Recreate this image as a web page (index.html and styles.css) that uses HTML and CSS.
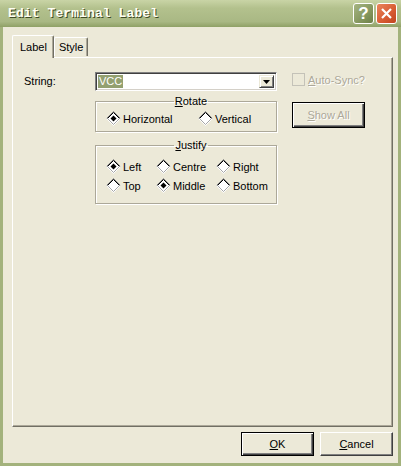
FILE: index.html
```html
<!DOCTYPE html>
<html lang="en">
<head>
    <meta charset="UTF-8">
    <title>Edit Terminal Label</title>
    <link rel="stylesheet" href="styles.css">
</head>
<body>
    <div class="window">
        <div class="titlebar">
            <span class="title">Edit Terminal Label</span>
            <div class="caption-btns">
                <span class="cap-btn help">?</span>
                <span class="cap-btn close">
                    <svg width="13" height="13" viewBox="0 0 13 13"><path d="M2 2 L11 11 M11 2 L2 11" stroke="#fff" stroke-width="2.2"/></svg>
                </span>
            </div>
        </div>

        <div class="client">
            <div class="tabs">
                <div class="tab active">Label</div>
                <div class="tab">Style</div>
            </div>

            <div class="panel">
                <div class="lbl">String:</div>

                <div class="col-mid">
                    <div class="combo">
                        <span class="combo-text"><span class="sel">VCC</span></span>
                        <span class="combo-btn">
                            <svg width="7" height="4" viewBox="0 0 7 4"><path d="M0 0 H7 L3.5 4 Z" fill="#000"/></svg>
                        </span>
                    </div>

                    <fieldset class="group rotate">
                        <legend><u>R</u>otate</legend>
                        <div class="radio-row cols-rotate">
                            <label class="radio"><svg class="dia" width="15" height="15" viewBox="0 0 15 15"><polygon points="7.5,1 14,7.5 7.5,14 1,7.5" fill="#fff"/><path d="M0.5 7.5 L7.5 0.5 L14.5 7.5" fill="none" stroke="#808080"/><path d="M1.5 7.5 L7.5 1.5 L13.5 7.5" fill="none" stroke="#000"/><path d="M0.5 7.5 L7.5 14.5 L14.5 7.5" fill="none" stroke="#fff"/><path d="M1.5 7.5 L7.5 13.5 L13.5 7.5" fill="none" stroke="#a6a6a6"/><polygon points="7.5,4.5 10.5,7.5 7.5,10.5 4.5,7.5" fill="#000"/></svg>Horizontal</label>
                            <label class="radio"><svg class="dia" width="15" height="15" viewBox="0 0 15 15"><polygon points="7.5,1 14,7.5 7.5,14 1,7.5" fill="#fff"/><path d="M0.5 7.5 L7.5 0.5 L14.5 7.5" fill="none" stroke="#808080"/><path d="M1.5 7.5 L7.5 1.5 L13.5 7.5" fill="none" stroke="#000"/><path d="M0.5 7.5 L7.5 14.5 L14.5 7.5" fill="none" stroke="#fff"/><path d="M1.5 7.5 L7.5 13.5 L13.5 7.5" fill="none" stroke="#a6a6a6"/></svg>Vertical</label>
                        </div>
                    </fieldset>

                    <fieldset class="group justify">
                        <legend><u>J</u>ustify</legend>
                        <div class="radio-row cols-justify">
                            <label class="radio"><svg class="dia" width="15" height="15" viewBox="0 0 15 15"><polygon points="7.5,1 14,7.5 7.5,14 1,7.5" fill="#fff"/><path d="M0.5 7.5 L7.5 0.5 L14.5 7.5" fill="none" stroke="#808080"/><path d="M1.5 7.5 L7.5 1.5 L13.5 7.5" fill="none" stroke="#000"/><path d="M0.5 7.5 L7.5 14.5 L14.5 7.5" fill="none" stroke="#fff"/><path d="M1.5 7.5 L7.5 13.5 L13.5 7.5" fill="none" stroke="#a6a6a6"/><polygon points="7.5,4.5 10.5,7.5 7.5,10.5 4.5,7.5" fill="#000"/></svg>Left</label>
                            <label class="radio"><svg class="dia" width="15" height="15" viewBox="0 0 15 15"><polygon points="7.5,1 14,7.5 7.5,14 1,7.5" fill="#fff"/><path d="M0.5 7.5 L7.5 0.5 L14.5 7.5" fill="none" stroke="#808080"/><path d="M1.5 7.5 L7.5 1.5 L13.5 7.5" fill="none" stroke="#000"/><path d="M0.5 7.5 L7.5 14.5 L14.5 7.5" fill="none" stroke="#fff"/><path d="M1.5 7.5 L7.5 13.5 L13.5 7.5" fill="none" stroke="#a6a6a6"/></svg>Centre</label>
                            <label class="radio"><svg class="dia" width="15" height="15" viewBox="0 0 15 15"><polygon points="7.5,1 14,7.5 7.5,14 1,7.5" fill="#fff"/><path d="M0.5 7.5 L7.5 0.5 L14.5 7.5" fill="none" stroke="#808080"/><path d="M1.5 7.5 L7.5 1.5 L13.5 7.5" fill="none" stroke="#000"/><path d="M0.5 7.5 L7.5 14.5 L14.5 7.5" fill="none" stroke="#fff"/><path d="M1.5 7.5 L7.5 13.5 L13.5 7.5" fill="none" stroke="#a6a6a6"/></svg>Right</label>
                            <label class="radio"><svg class="dia" width="15" height="15" viewBox="0 0 15 15"><polygon points="7.5,1 14,7.5 7.5,14 1,7.5" fill="#fff"/><path d="M0.5 7.5 L7.5 0.5 L14.5 7.5" fill="none" stroke="#808080"/><path d="M1.5 7.5 L7.5 1.5 L13.5 7.5" fill="none" stroke="#000"/><path d="M0.5 7.5 L7.5 14.5 L14.5 7.5" fill="none" stroke="#fff"/><path d="M1.5 7.5 L7.5 13.5 L13.5 7.5" fill="none" stroke="#a6a6a6"/></svg>Top</label>
                            <label class="radio"><svg class="dia" width="15" height="15" viewBox="0 0 15 15"><polygon points="7.5,1 14,7.5 7.5,14 1,7.5" fill="#fff"/><path d="M0.5 7.5 L7.5 0.5 L14.5 7.5" fill="none" stroke="#808080"/><path d="M1.5 7.5 L7.5 1.5 L13.5 7.5" fill="none" stroke="#000"/><path d="M0.5 7.5 L7.5 14.5 L14.5 7.5" fill="none" stroke="#fff"/><path d="M1.5 7.5 L7.5 13.5 L13.5 7.5" fill="none" stroke="#a6a6a6"/><polygon points="7.5,4.5 10.5,7.5 7.5,10.5 4.5,7.5" fill="#000"/></svg>Middle</label>
                            <label class="radio"><svg class="dia" width="15" height="15" viewBox="0 0 15 15"><polygon points="7.5,1 14,7.5 7.5,14 1,7.5" fill="#fff"/><path d="M0.5 7.5 L7.5 0.5 L14.5 7.5" fill="none" stroke="#808080"/><path d="M1.5 7.5 L7.5 1.5 L13.5 7.5" fill="none" stroke="#000"/><path d="M0.5 7.5 L7.5 14.5 L14.5 7.5" fill="none" stroke="#fff"/><path d="M1.5 7.5 L7.5 13.5 L13.5 7.5" fill="none" stroke="#a6a6a6"/></svg>Bottom</label>
                        </div>
                    </fieldset>
                </div>

                <div class="col-right">
                    <div class="check"><span class="check-box"></span><span class="dis-text"><u>A</u>uto-Sync?</span></div>
                    <div class="btn default"><span class="dis-text"><u>S</u>how All</span></div>
                </div>
            </div>

            <div class="buttons">
                <div class="btn default"><u>O</u>K</div>
                <div class="btn"><u>C</u>ancel</div>
            </div>
        </div>
    </div>
</body>
</html>
```

FILE: styles.css
```css
body {
    margin: 0;
    font-family: "Liberation Sans", Arial, sans-serif;
    font-size: 11px;
    color: #000;
    background-color: #ece9d8;
}

.window {
    width: 401px;
    height: 466px;
    box-sizing: border-box;
    background-color: #ece9d8;
    border: 3px solid #a3b27c;
    border-top: none;
    display: flex;
    flex-direction: column;
}

/* barra de titulo */
.titlebar {
    height: 27px;
    margin: 0 -3px;
    background: linear-gradient(#c9d4a6, #b3c18d 30%, #a9b884 80%, #8fa066);
    display: flex;
    align-items: center;
    justify-content: space-between;
    padding: 0 4px 0 8px;
}

.title {
    font-family: "Liberation Mono", "DejaVu Sans Mono", monospace;
    font-weight: bold;
    font-size: 13px;
    color: #fffff4;
    text-shadow: 1px 1px 0 #3d4a24;
    letter-spacing: 0.1px;
}

.caption-btns {
    display: flex;
    gap: 2px;
}

.cap-btn {
    width: 19px;
    height: 19px;
    border: 1px solid #fff;
    border-radius: 3px;
    display: flex;
    align-items: center;
    justify-content: center;
    color: #fff;
    font-family: "Liberation Sans", Arial, sans-serif;
    font-weight: bold;
    font-size: 17px;
}

.help {
    background: linear-gradient(135deg, #a6b582, #7f9158 70%, #6d7f48);
}

.close {
    background: linear-gradient(135deg, #e9855c, #d75a32 60%, #c04420);
}

.client {
    flex: 1;
    display: flex;
    flex-direction: column;
    padding: 8px 5px 7px 9px;
}

/* abas */
.tabs {
    display: flex;
    align-items: flex-end;
    height: 22px;
}

.tab {
    height: 18px;
    line-height: 18px;
    padding: 0 4px 0 4px;
    border: 1px solid #fff;
    border-bottom: none;
    border-right: 1px solid #716f64;
    box-shadow: inset -1px 0 #aca899;
    border-radius: 2px 2px 0 0;
    margin-bottom: 1px;
}

.tab.active {
    height: 22px;
    line-height: 22px;
    padding: 0 6px 0 7px;
    margin-bottom: -1px;
    position: relative;
    background-color: #ece9d8;
    z-index: 1;
}

.panel {
    height: 370px;
    box-sizing: border-box;
    border: 1px solid;
    border-color: #fff #716f64 #716f64 #fff;
    box-shadow: inset -1px -1px #aca899;
    display: flex;
    padding: 14px 0 0 11px;
}

.lbl {
    width: 71px;
    height: 19px;
    line-height: 19px;
}

.col-mid {
    width: 182px;
}

.combo {
    height: 19px;
    box-sizing: border-box;
    background-color: #fff;
    border: 1px solid;
    border-color: #808080 #fff #fff #808080;
    box-shadow: inset 1px 1px #404040, inset -1px -1px #d4d0c8;
    display: flex;
    padding: 2px;
}

.combo-text {
    flex: 1;
    display: flex;
    align-items: center;
}

.sel {
    background-color: #93a070;
    color: #fff;
    height: 13px;
    line-height: 13px;
    padding: 0 1px;
}

.combo-btn {
    width: 15px;
    box-sizing: border-box;
    background-color: #ece9d8;
    border: 1px solid;
    border-color: #ece9d8 #404040 #404040 #ece9d8;
    box-shadow: inset 1px 1px #fff, inset -1px -1px #808080;
    display: flex;
    align-items: center;
    justify-content: center;
}

.group {
    margin: 0;
    padding: 4px 0 5px 10px;
    border: 1px solid #aca899;
    box-shadow: 1px 1px 0 #fff, inset 1px 1px 0 #fff;
}

.group legend {
    margin: 0 auto;
    padding: 0 1px;
    line-height: 12px;
}

.rotate {
    margin-top: 4px;
}

.justify {
    margin-top: 7px;
    padding-top: 8px;
    padding-bottom: 10px;
}

.radio-row {
    display: grid;
    row-gap: 4px;
}

.cols-rotate {
    grid-template-columns: 92px auto;
}

.cols-justify {
    grid-template-columns: 50px 60px auto;
}

.radio {
    display: flex;
    align-items: center;
    height: 15px;
    gap: 2px;
}

.dia {
    flex-shrink: 0;
}

.col-right {
    margin-left: 15px;
    display: flex;
    flex-direction: column;
    align-items: flex-start;
}

.check {
    display: flex;
    align-items: center;
    gap: 3px;
    height: 13px;
    margin-top: 1px;
}

.check-box {
    width: 11px;
    height: 11px;
    border: 1px solid #c4c2b8;
    background-color: #ece9d8;
}

.dis-text {
    color: #aca899;
    text-shadow: 1px 1px 0 #fff;
}

.btn {
    width: 73px;
    height: 24px;
    box-sizing: border-box;
    border: 1px solid;
    border-color: #fff #404040 #404040 #fff;
    box-shadow: inset -1px -1px #808080;
    display: flex;
    align-items: center;
    justify-content: center;
}

.btn.default {
    border: 1px solid #000;
    box-shadow: inset 1px 1px #fff, inset -1px -1px #404040, inset -2px -2px #808080;
}

.col-right .btn {
    margin-top: 16px;
    height: 26px;
}

.buttons {
    display: flex;
    justify-content: flex-end;
    gap: 6px;
    margin-top: 5px;
}
```
